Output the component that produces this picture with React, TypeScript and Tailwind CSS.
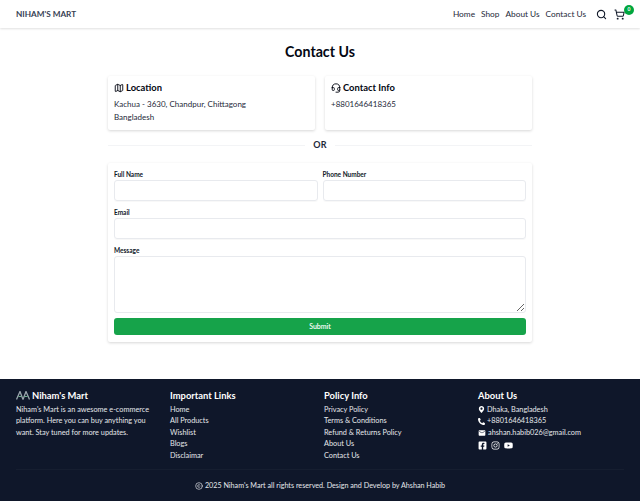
import React from 'react';
import { Map, Headset, Search, ShoppingCart, Copyright } from 'lucide-react';
import { FaFacebookSquare, FaInstagram, FaYoutube, FaMapMarkerAlt, FaPhoneAlt } from 'react-icons/fa';
import { MdEmail } from 'react-icons/md';

const navLinks = ['Home', 'Shop', 'About Us', 'Contact Us'];
const importantLinks = ['Home', 'All Products', 'Wishlist', 'Blogs', 'Disclaimar'];
const policyLinks = ['Privacy Policy', 'Terms & Conditions', 'Refund & Returns Policy', 'About Us', 'Contact Us'];

const Field: React.FC<{ label: string }> = ({ label }) => (
  <div className="flex-1">
    <label className="block text-[6.5px] leading-[11px] font-bold text-gray-900">{label}</label>
    <input className="block w-full h-[21px] rounded-[3px] border border-[#e8eaee] shadow-[0_1px_1px_rgba(0,0,0,0.03)]" />
  </div>
);

const App: React.FC = () => {
  return (
    <div className="w-[640px] h-[501px] flex flex-col bg-white overflow-hidden antialiased font-['Lato',sans-serif]">
      {/* Navbar */}
      <header className="h-[28px] shrink-0 flex items-center justify-between pl-4 pr-[15px] shadow-[0_1px_2px_rgba(0,0,0,0.12)]">
        <span className="text-[8.2px] font-bold text-gray-700">NIHAM'S MART</span>
        <div className="flex items-center">
          <nav className="flex gap-[6px] text-[8.3px] text-gray-800">
            {navLinks.map(link => <a key={link}>{link}</a>)}
          </nav>
          <Search size={11} strokeWidth={2.4} className="ml-[10px] text-gray-900" />
          <div className="relative ml-[7px]">
            <ShoppingCart size={11} strokeWidth={2.2} className="text-gray-900" />
            <span className="absolute -top-[4px] -right-[9px] w-[10px] h-[10px] rounded-full bg-green-600 text-white text-[5px] font-bold flex items-center justify-center">0</span>
          </div>
        </div>
      </header>

      <main className="flex-1 flex flex-col items-center">
        <h1 className="mt-[14px] text-[14.2px] leading-[20px] font-bold text-gray-950">Contact Us</h1>

        <div className="w-[424px] mt-[14px]">
          <div className="flex gap-[10px]">
            <div className="flex-1 h-[54px] px-[6px] pt-[5px] rounded-[2px] shadow-[0_1px_3px_rgba(0,0,0,0.16)]">
              <h3 className="flex items-center gap-[2px] text-[9.4px] leading-[14px] font-bold text-gray-950">
                <Map size={10} strokeWidth={2.2} /> Location
              </h3>
              <p className="mt-[3px] text-[8px] leading-[13px] text-gray-800">Kachua - 3630, Chandpur, Chittagong</p>
              <p className="text-[8px] leading-[13px] text-gray-800">Bangladesh</p>
            </div>
            <div className="flex-1 h-[54px] px-[6px] pt-[5px] rounded-[2px] shadow-[0_1px_3px_rgba(0,0,0,0.16)]">
              <h3 className="flex items-center gap-[2px] text-[9.4px] leading-[14px] font-bold text-gray-950">
                <Headset size={10} strokeWidth={2.2} /> Contact Info
              </h3>
              <p className="mt-[3px] text-[8px] leading-[13px] text-gray-800">+8801646418365</p>
            </div>
          </div>

          <div className="flex items-center gap-2 mt-[9px] h-[12px]">
            <div className="flex-1 border-t border-gray-100" />
            <span className="text-[9px] font-bold text-gray-800 tracking-[0.3px]">OR</span>
            <div className="flex-1 border-t border-gray-100" />
          </div>

          <form className="mt-[12px] h-[179px] px-[6px] pt-[6px] rounded-[2px] shadow-[0_1px_3px_rgba(0,0,0,0.16)]">
            <div className="flex gap-[5px]">
              <Field label="Full Name" />
              <Field label="Phone Number" />
            </div>
            <div className="mt-[6px]">
              <Field label="Email" />
            </div>
            <div className="mt-[6px]">
              <label className="block text-[6.5px] leading-[11px] font-bold text-gray-900">Message</label>
              <textarea className="block w-full h-[57px] rounded-[3px] border border-[#e8eaee]" />
            </div>
            <button type="button" className="block mt-[5px] w-full h-[17px] rounded-[3px] bg-[#16a34a] text-white text-[7px] font-semibold">Submit</button>
          </form>
        </div>
      </main>

      {/* Footer */}
      <footer className="h-[122px] shrink-0 bg-[#0f172a] text-gray-200 px-4 pt-[10px]">
        <div className="grid grid-cols-4 gap-x-2 h-[81px] border-b border-white/[0.03]">
          <div>
            <h4 className="flex items-center gap-[2px] text-[9.4px] leading-[13px] font-bold text-white">
              <svg width="14" height="9" viewBox="0 0 14 9" fill="none" className="shrink-0">
                <path d="M0.5 8.5 L4 0.5 L7 8.5 M7 8.5 L10 0.5 L13.5 8.5" stroke="#9aa5ad" strokeWidth="1.3" />
                <path d="M2.5 5.5 H5.5 M8.5 5.5 H11.5" stroke="#6fae8c" strokeWidth="1" />
              </svg>
              Niham's Mart
            </h4>
            <p className="mt-[2px] text-[7.3px] leading-[11.4px] w-[138px]">Niham's Mart is an awesome e-commerce platform. Here you can buy anything you want. Stay tuned for more updates.</p>
          </div>
          <div>
            <h4 className="text-[9.4px] leading-[13px] font-bold text-white">Important Links</h4>
            <ul className="mt-[2px] text-[7.3px] leading-[11.4px]">
              {importantLinks.map(link => <li key={link}>{link}</li>)}
            </ul>
          </div>
          <div>
            <h4 className="text-[9.4px] leading-[13px] font-bold text-white">Policy Info</h4>
            <ul className="mt-[2px] text-[7.3px] leading-[11.4px]">
              {policyLinks.map(link => <li key={link}>{link}</li>)}
            </ul>
          </div>
          <div>
            <h4 className="text-[9.4px] leading-[13px] font-bold text-white">About Us</h4>
            <ul className="mt-[2px] text-[7.3px] leading-[11.4px]">
              <li className="flex items-center gap-[2px]"><FaMapMarkerAlt size={7} className="text-white" /> Dhaka, Bangladesh</li>
              <li className="flex items-center gap-[2px]"><FaPhoneAlt size={7} className="text-white" /> +8801646418365</li>
              <li className="flex items-center gap-[2px]"><MdEmail size={8} className="text-white" /> ahshan.habib026@gmail.com</li>
            </ul>
            <div className="flex items-center gap-[4px] mt-[3px] text-white">
              <FaFacebookSquare size={9} />
              <FaInstagram size={9} />
              <FaYoutube size={9} />
            </div>
          </div>
        </div>
        <p className="mt-[10px] flex items-center justify-center gap-[2px] text-[7.2px] leading-[11px]">
          <Copyright size={8} /> 2025 Niham's Mart all rights reserved. Design and Develop by Ahshan Habib
        </p>
      </footer>
    </div>
  );
};

export default App;
